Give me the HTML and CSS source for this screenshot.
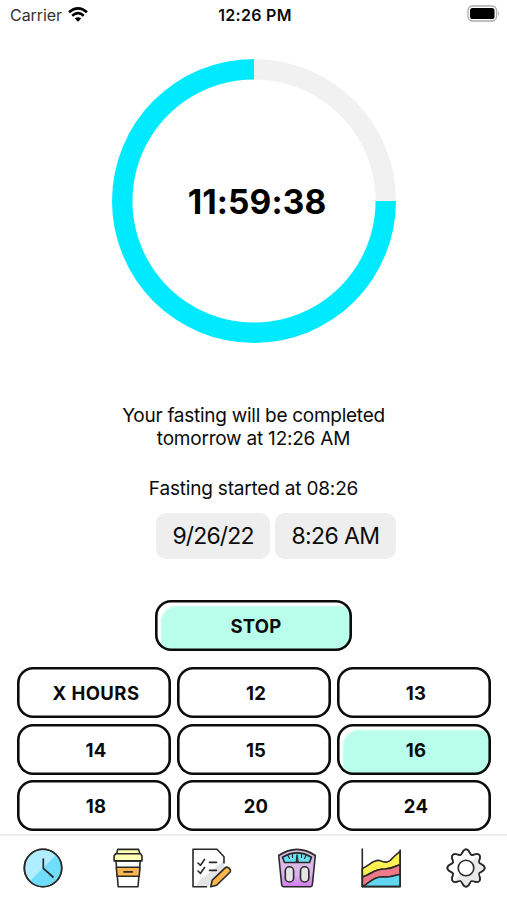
FILE: index.html
```html
<!DOCTYPE html>
<html lang="en">
<head>
<meta charset="utf-8">
<title>Fasting timer</title>
<link rel="stylesheet" href="styles.css">
</head>
<body>
<div class="app">
  <header class="status">
    <div class="carrier"><span>Carrier</span>
      <svg width="20" height="15" viewBox="0 0 20 15" fill="none" stroke="#000" stroke-width="2.7"><path d="M1 5.3Q10-2.4 19 5.3M4.2 8.7Q10 3.7 15.8 8.7"/><path d="M6.8 11.5Q10 8.9 13.2 11.5L10 14.7Z" fill="#000" stroke="none"/></svg>
    </div>
    <div class="clock">12:26 PM</div>
    <div class="battery">
      <svg width="33" height="17" viewBox="0 0 33 17"><rect x="1" y="1" width="28.5" height="15" rx="4.5" fill="none" stroke="#aaa" stroke-width="1.3"/><rect x="3" y="3" width="24.5" height="11" rx="2.6"/><path d="M31 6.2Q33 8.5 31 10.8Z" fill="#aaa"/></svg>
    </div>
  </header>
  <main>
    <div class="ring"><span class="timer">11:59:38</span></div>
    <p class="note"><span class="l1">Your fasting will be completed</span><br><span class="l2">tomorrow at 12:26 AM</span></p>
    <p class="started">Fasting started at 08:26</p>
    <div class="pickers"><span class="date">9/26/22</span><span class="time">8:26 AM</span></div>
    <button class="btn stop active">STOP</button>
    <div class="hours">
      <button class="btn wide">X HOURS</button><button class="btn">12</button><button class="btn">13</button>
      <button class="btn">14</button><button class="btn">15</button><button class="btn active">16</button>
      <button class="btn">18</button><button class="btn">20</button><button class="btn">24</button>
    </div>
  </main>
  <nav class="tabs">
    <svg viewBox="0 0 40 40"><circle cx="20" cy="20" r="18.7" fill="#aeeeff"/><path d="M33.2 6.8A18.7 18.7 0 0 1 6.8 33.2Z" fill="#70defa" stroke="none"/><circle cx="20" cy="20" r="18.7" fill="none"/><path d="M20.3 11V20.3L30 29" fill="none" stroke-width="1.7"/></svg>
    <svg viewBox="0 0 40 40"><path d="M8 13L10.2 38.8H30L32.2 13Z" fill="#fff"/><path d="M8.3 19.2H31.9L31.2 28.3H9.1Z" fill="#ffb74d"/><path d="M8.5 6L9.7 1.4H30.6L32 6" fill="#ffffb5"/><path d="M7.5 5.8H32.7L34 8V12.9H6.1V8Z" fill="#ffffb5"/><path d="M16 23.8H24.3" stroke-width="1.8"/></svg>
    <svg viewBox="0 0 40 40"><path d="M5 38.8Q5 32 15 27L32 12V22L16 38.8Z" fill="#e4e4e4" stroke="none"/><path d="M14.5 38.8H1V1.3H25L32 8.8V15" fill="none"/><path d="M6 15L8.5 17.3L12.5 11.5M6 23L8.5 25.3L12.5 19.5M17.5 14.4H24.5M17.5 22.4H24.5" fill="none"/><path d="M18.7 38.7L20.3 32.2L33.7 19.3Q36.3 18.5 38.4 21.7Q38.7 23.3 38 24.2L24.6 37.3Z" fill="#ffb64d"/></svg>
    <svg viewBox="0 0 40 40"><defs><linearGradient id="scale" x2="0" y2="1"><stop stop-color="#d5bfe0"/><stop offset=".65" stop-color="#deb4ef"/><stop offset="1" stop-color="#d07bee"/></linearGradient></defs><path d="M1.7 7.5Q20-4.8 38.3 7.5L35.3 37Q35.2 38.7 33.5 38.7H6.5Q4.8 38.7 4.7 37Z" fill="url(#scale)"/><path d="M5.5 9.2Q20 .5 34.5 9.2L32.5 14.5H7.5Z" fill="#68dff5"/><path d="M11 7.5L12.5 10.5M15.5 6V9.5M24.5 6V9.5M29 7.5L27.5 10.5" fill="none" stroke-width="1.1"/><path d="M20 7L19 14.3H21Z" fill="#222" stroke-width="1"/><rect x="8.3" y="18.8" width="8.3" height="15.2" rx="4.1" fill="#e5e5e5"/><rect x="23.5" y="18.8" width="8.3" height="15.2" rx="4.1" fill="#e5e5e5"/></svg>
    <svg viewBox="0 0 40 40"><path d="M1.3 20.5C10 16.5 12 11.5 18.5 12.5C25 15 28 15 32 9.5L39.2 3.2V17C35 17 34 20.5 24 21C12 21 11 26.5 1.3 29Z" fill="#fff14f"/><path d="M1.3 29C11 26.5 12 21 24 21C34 20.5 35 17 39.2 17V26.5C34 26.5 32 30 22 28.7C10 28.7 8 36.5 1.3 38.5Z" fill="#ee7a89"/><path d="M1.3 38.5C8 36.5 10 28.7 22 28.7C32 30 34 26.5 39.2 26.5V38.5Z" fill="#62d5f3"/><path d="M1.3 1V38.6H39.2V2" fill="none"/></svg>
    <svg viewBox="-20 -20 40 40"><path id="gear" fill="#fff" d="M-5.4-13.1C-3.5-13.9-3.4-18.7 0-18.7C3.4-18.7 3.5-13.9 5.4-13.1C7.35-12.3 10.8-15.6 13.2-13.2C15.6-10.8 12.3-7.35 13.1-5.4C13.9-3.5 18.7-3.4 18.7 0C18.7 3.4 13.9 3.5 13.1 5.4C12.3 7.35 15.6 10.8 13.2 13.2C10.8 15.6 7.35 12.3 5.4 13.1C3.5 13.9 3.4 18.7 0 18.7C-3.4 18.7-3.5 13.9-5.4 13.1C-7.35 12.3-10.8 15.6-13.2 13.2C-15.6 10.8-12.3 7.35-13.1 5.4C-13.9 3.5-18.7 3.4-18.7 0C-18.7-3.4-13.9-3.5-13.1-5.4C-12.3-7.35-15.6-10.8-13.2-13.2C-10.8-15.6-7.35-12.3-5.4-13.1Z"/><path d="M11-11.5L13.1-5.4L18 0L13.1 5.4V13L5.4 13.1L0 18L-5.4 13.1L-11 11.5Z" fill="#e9e9e9" stroke="none"/><use href="#gear" fill-opacity="0"/><circle r="7.8" fill="#fff"/></svg>
  </nav>
</div>
</body>
</html>
```
FILE: styles.css
```css
* { box-sizing: border-box; }
body { margin: 0; background: #fff; color: #0b0b0b; font-family: Inter, "Liberation Sans", sans-serif; }
.app { width: 507px; height: 900px; display: flex; flex-direction: column; overflow: hidden; }
.status { height: 30px; flex: none; display: grid; grid-template-columns: 1fr auto 1fr; align-items: center; padding: 0 7px 0 10px; font-size: 16px; line-height: 20px; }
.carrier { display: flex; align-items: center; gap: 6px; color: #333; letter-spacing: -.05px; }
.carrier svg { margin-top: -2px; }
.clock { font-weight: 600; letter-spacing: .3px; margin-top: -1px; }
.battery { display: flex; justify-content: flex-end; margin-top: -3px; }
main { flex: none; height: 804px; display: flex; flex-direction: column; align-items: center; }
.ring { flex: none; width: 284px; height: 284px; margin-top: 29px; border-radius: 50%; display: flex; align-items: center; justify-content: center; background: radial-gradient(circle, #fff 121px, transparent 122px), conic-gradient(#f1f1f1 25%, #00eaff 0); }
.timer { font-size: 33.5px; line-height: 40px; font-weight: 700; color: #000; margin: 2px 0 0 7px; letter-spacing: .1px; }
.note { margin: 61px 0 0; font-size: 19px; line-height: 23px; text-align: center; }
.l1 { letter-spacing: -.27px; }
.l2 { letter-spacing: -.22px; }
.started { margin: 27px 0 0; font-size: 19px; line-height: 23px; letter-spacing: -.19px; }
.pickers { display: flex; gap: 5px; margin: 13px 0 0 45px; font-size: 23px; line-height: 46px; text-align: center; }
.pickers span { height: 46px; border-radius: 10px; background: #eee; }
.date { width: 114px; letter-spacing: -.85px; }
.time { width: 121px; letter-spacing: -.6px; }
.btn { height: 51px; padding: 1px 0 0 5px; border: 0; box-shadow: inset 0 0 0 2.6px #0b0b0b; border-radius: 16px; background: #fff; color: #0b0b0b; font: 650 18.5px/24px Inter, "Liberation Sans", sans-serif; letter-spacing: .2px; }
.wide { letter-spacing: .45px; }
.active { background: #b9feea; box-shadow: inset 0 0 0 2.6px #0b0b0b, inset 6px 6px 2px #fff; }
.stop { flex: none; width: 197px; margin-top: 41px; }
.hours { display: grid; grid-template-columns: repeat(3, 154px); column-gap: 6px; row-gap: 5.7px; margin-top: 16px; }
.tabs { flex: none; height: 66px; border-top: 2px solid #eee; display: grid; grid-template-columns: repeat(6, 84.5px); justify-items: center; padding: 12px 0 0 1px; }
.tabs svg { width: 40px; height: 40px; stroke: #292929; stroke-width: 1.6; stroke-linejoin: round; stroke-linecap: round; }
```
